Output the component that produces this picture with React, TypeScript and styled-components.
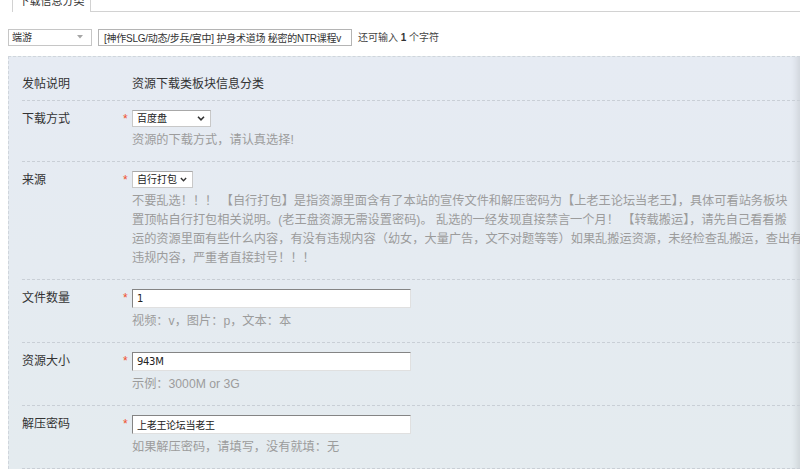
import React from 'react';
import styled, { createGlobalStyle } from 'styled-components';

const GlobalStyle = createGlobalStyle`
  html, body {
    margin: 0;
    padding: 0;
    background: #fff;
  }
  body {
    width: 800px;
    height: 471px;
    overflow: hidden;
    font: 12px/1.5 "Liberation Sans", "Noto Sans CJK SC", sans-serif;
    color: #333;
  }
`;

const TabBar = styled.div`
  display: flex;
  height: 24px;
  margin-top: -12px;
  padding-left: 12px;
`;

const Tab = styled.div`
  width: 77px;
  border: 1px solid #d2d2d2;
  border-bottom: none;
  background: #fff;
  text-align: center;
  line-height: 24px;
  font-size: 11px;
  color: #333;
`;

const TabFill = styled.div`
  flex: 1;
  border-bottom: 1px solid #d2d2d2;
`;

const TopRow = styled.div`
  display: flex;
  align-items: center;
  gap: 6px;
  height: 18px;
  margin: 16px 0 0 8px;
`;

const TypeSelect = styled.div`
  box-sizing: border-box;
  width: 84px;
  height: 17px;
  display: flex;
  align-items: center;
  justify-content: space-between;
  padding: 0 8px 0 3px;
  border: 1px solid #c6c6c6;
  background: #fff;
  font-size: 10px;
  color: #333;
`;

const TitleInput = styled.input`
  box-sizing: border-box;
  width: 254px;
  height: 17px;
  padding: 0 4px 0 5px;
  border: 1px solid #b4b4b4;
  background: #fff;
  font: 10px "Liberation Sans", "Noto Sans CJK SC", sans-serif;
  letter-spacing: -0.25px;
  color: #333;
  outline: none;
`;

const Counter = styled.span`
  font-size: 10px;
  color: #444;
  white-space: nowrap;
  b {
    font-weight: bold;
    color: #333;
  }
`;

const Panel = styled.div`
  box-sizing: border-box;
  width: 792px;
  margin: 10px 0 0 8px;
  padding-top: 8px;
  overflow: hidden;
  border-top: 1px dashed #cfd5dc;
  border-left: 1px dashed #cfd5dc;
  background: linear-gradient(#e6ebf3, #e4ebef);
  box-shadow: inset -9px 0 7px -6px rgba(0, 0, 0, 0.1);
`;

const Row = styled.div<{ $tight?: boolean }>`
  display: flex;
  margin-left: 13px;
  padding: ${(p) => (p.$tight ? '9px 0 6px' : '9px 0 11px')};
  border-bottom: 1px dashed #c9cfd6;
`;

const Label = styled.div<{ $h: number }>`
  flex: none;
  width: 101px;
  line-height: ${(p) => p.$h}px;
  font-size: 12px;
  color: #333;
`;

const Star = styled.span`
  flex: none;
  width: 9px;
  line-height: 18px;
  font-size: 12px;
  color: #f0502c;
`;

const Field = styled.div`
  display: flex;
  flex-direction: column;
  align-items: flex-start;
  min-width: 0;
`;

const Value = styled.div`
  line-height: 20px;
  font-size: 12px;
  color: #333;
`;

const Select = styled.div<{ $w: number; $gap?: boolean }>`
  box-sizing: border-box;
  width: ${(p) => p.$w}px;
  height: 17px;
  display: flex;
  align-items: center;
  justify-content: ${(p) => (p.$gap ? 'flex-start' : 'space-between')};
  gap: 3px;
  padding: 0 5px 0 4px;
  border: 1px solid #c8c8c8;
  border-top-color: #a8a8a8;
  background: #fff;
  font-size: 10px;
  color: #222;
  white-space: nowrap;
`;

const TextInput = styled.input`
  box-sizing: border-box;
  width: 279px;
  height: 19px;
  padding: 0 4px;
  border: 1px solid;
  border-color: #848484 #e0e0e0 #e0e0e0 #848484;
  background: #fff;
  font: 10px "DejaVu Sans", "Noto Sans CJK SC", sans-serif;
  letter-spacing: -0.3px;
  color: #222;
  outline: none;
`;

const Hint = styled.div`
  margin-top: 4px;
  line-height: 19px;
  font-size: 12.2px;
  color: #9c9c9c;
  white-space: nowrap;
`;

const Chevron = () => (
  <svg width="8" height="5" viewBox="0 0 8 5">
    <polyline points="1,0.8 4,3.8 7,0.8" fill="none" stroke="#333" strokeWidth="1.6" />
  </svg>
);

const Caret = () => (
  <svg width="6" height="4" viewBox="0 0 6 4">
    <polygon points="0,0 6,0 3,3.5" fill="#a6a6a6" />
  </svg>
);

const inputRows = [
  { label: '文件数量', value: '1', hint: '视频：v，图片：p，文本：本' },
  { label: '资源大小', value: '943M', hint: '示例：3000M or 3G' },
  { label: '解压密码', value: '上老王论坛当老王', hint: '如果解压密码，请填写，没有就填：无' },
];

export default function App() {
  return (
    <>
      <GlobalStyle />
      <TabBar>
        <Tab>下载信息分类</Tab>
        <TabFill />
      </TabBar>

      <TopRow>
        <TypeSelect>
          <span>端游</span>
          <Caret />
        </TypeSelect>
        <TitleInput readOnly value="[神作SLG/动态/步兵/宫中] 护身术道场 秘密的NTR课程v" />
        <Counter>
          还可输入 <b>1</b> 个字符
        </Counter>
      </TopRow>

      <Panel>
        <Row $tight>
          <Label $h={20}>发帖说明</Label>
          <Star />
          <Value>资源下载类板块信息分类</Value>
        </Row>

        <Row>
          <Label $h={18}>下载方式</Label>
          <Star>*</Star>
          <Field>
            <Select $w={79}>
              <span>百度盘</span>
              <Chevron />
            </Select>
            <Hint>资源的下载方式，请认真选择!</Hint>
          </Field>
        </Row>

        <Row>
          <Label $h={18}>来源</Label>
          <Star>*</Star>
          <Field>
            <Select $w={61} $gap>
              <span>自行打包</span>
              <Chevron />
            </Select>
            <Hint>
              不要乱选！！！ 【自行打包】是指资源里面含有了本站的宣传文件和解压密码为【上老王论坛当老王】，具体可看站务板块
              <br />
              置顶帖自行打包相关说明。(老王盘资源无需设置密码)。 乱选的一经发现直接禁言一个月！ 【转载搬运】，请先自己看看搬
              <br />
              运的资源里面有些什么内容，有没有违规内容（幼女，大量广告，文不对题等等）如果乱搬运资源，未经检查乱搬运，查出有
              <br />
              违规内容，严重者直接封号！！！
            </Hint>
          </Field>
        </Row>

        {inputRows.map((r) => (
          <Row key={r.label}>
            <Label $h={19}>{r.label}</Label>
            <Star>*</Star>
            <Field>
              <TextInput readOnly value={r.value} />
              <Hint>{r.hint}</Hint>
            </Field>
          </Row>
        ))}
      </Panel>
    </>
  );
}
